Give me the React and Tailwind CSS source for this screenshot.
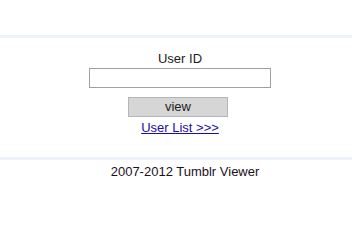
export default function App() {
  return (
    <div className="min-h-[248px] bg-white pt-[35px] text-[13px] text-[#222] [font-family:'Liberation_Sans',Arial,sans-serif]">
      <div className="h-[3px] bg-[#eef2fa]" />
      <form className="flex flex-col items-center pt-[13px] pb-[21px] pl-[8px]">
        <label className="leading-[16px]">User ID</label>
        <input type="text" className="mt-[1px] h-[20px] w-[182px] border border-[#a0a0a0] bg-white" />
        <button type="button" className="mt-[9px] mr-[4px] h-[20px] w-[100px] border border-[#b5b5b5] bg-[#d6d6d6] leading-[18px]">view</button>
        <a href="#" className="mt-[3px] leading-[16px] text-[#1a0dab] underline">User List &gt;&gt;&gt;</a>
      </form>
      <div className="h-[3px] bg-[#eef2fa]" />
      <footer className="pt-[4px] pl-[18px] text-center leading-[16px] text-[#1c1020]">2007-2012 Tumblr Viewer</footer>
    </div>
  )
}
